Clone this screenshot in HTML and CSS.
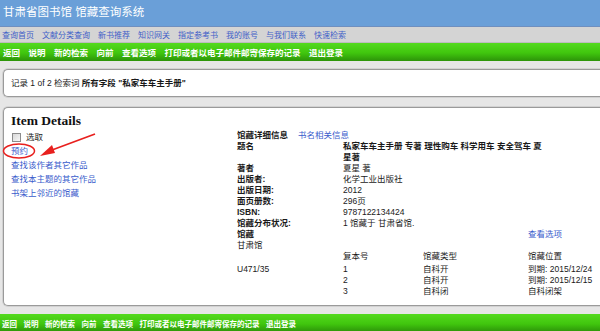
FILE: index.html
```html
<!DOCTYPE html>
<html lang="zh">
<head>
<meta charset="utf-8">
<title>甘肃省图书馆 馆藏查询系统</title>
<link rel="stylesheet" href="styles.css">
</head>
<body>
<header class="header"><h1 class="site-title">甘肃省图书馆 馆藏查询系统</h1></header>
<nav class="topnav">
  <a href="#">查询首页</a>
  <a href="#">文献分类查询</a>
  <a href="#">新书推荐</a>
  <a href="#">知识网关</a>
  <a href="#">指定参考书</a>
  <a href="#">我的账号</a>
  <a href="#">与我们联系</a>
  <a href="#">快速检索</a>
</nav>
<div class="greenbar">
  <a href="#">返回</a>
  <a href="#">说明</a>
  <a href="#">新的检索</a>
  <a href="#">向前</a>
  <a href="#">查看选项</a>
  <a href="#">打印或者以电子邮件邮寄保存的记录</a>
  <a href="#">退出登录</a>
</div>
<main class="content">
  <section class="box record-box">记录 1 of 2 检索词 <b>所有字段 "私家车车主手册"</b></section>
  <section class="box detail-box">
    <h2 class="detail-title">Item Details</h2>
    <div class="detail-cols">
      <div class="left-col">
        <label class="select-row"><span class="cb"></span>选取</label>
        <a href="#">预约</a>
        <a href="#">查找该作者其它作品</a>
        <a href="#">查找本主题的其它作品</a>
        <a href="#">书架上邻近的馆藏</a>
      </div>
      <div class="right-col">
        <div class="full"><b>馆藏详细信息</b><a class="related" href="#">书名相关信息</a></div>
        <b>题名</b><b class="val title-val">私家车车主手册 专著 理性购车 科学用车 安全驾车 夏星著</b>
        <b>著者</b><span class="val">夏星 著</span>
        <b>出版者:</b><span class="val">化学工业出版社</span>
        <b>出版日期:</b><span class="val">2012</span>
        <b>面页册数:</b><span class="val">296页</span>
        <b>ISBN:</b><span class="val">9787122134424</span>
        <b>馆藏分布状况:</b><span class="val">1 馆藏于 甘肃省馆.</span>
        <b class="span3">馆藏</b><a href="#">查看选项</a>
        <span class="full">甘肃馆</span>
        <span></span><span>复本号</span><span>馆藏类型</span><span>馆藏位置</span>
        <span class="first">U471/35</span><span class="first">1</span><span class="first">自科开</span><span class="first">到期: 2015/12/24</span>
        <span></span><span>2</span><span>自科开</span><span>到期: 2015/12/15</span>
        <span></span><span>3</span><span>自科闭</span><span>自科闭架</span>
      </div>
    </div>
  </section>
</main>
<div class="greenbar bottom">
  <a href="#">返回</a>
  <a href="#">说明</a>
  <a href="#">新的检索</a>
  <a href="#">向前</a>
  <a href="#">查看选项</a>
  <a href="#">打印或者以电子邮件邮寄保存的记录</a>
  <a href="#">退出登录</a>
</div>
<svg class="annotation" width="600" height="331" viewBox="0 0 600 331" aria-hidden="true">
  <ellipse cx="19" cy="151" rx="15.5" ry="7" fill="none" stroke="#e8201e" stroke-width="1.5"/>
  <path d="M95 134 L52 150" stroke="#e8201e" stroke-width="1.8" fill="none"/>
  <polygon points="40,156 52,145 55,153" fill="#e8201e"/>
</svg>
</body>
</html>
```

FILE: styles.css
```css
* { box-sizing: border-box; margin: 0; padding: 0; }
html, body { width: 600px; height: 331px; overflow: hidden; }
body {
  font-family: "Liberation Sans", "Noto Sans CJK SC", sans-serif;
  font-size: 8.5px;
  color: #1a1a1a;
  background: #e6e6e6;
  position: relative;
}
a { color: #3a5ccc; text-decoration: none; }
b { font-weight: bold; }

.header {
  height: 27px;
  background: #6a9fd8;
  border-bottom: 1px solid #6f8fbf;
  display: flex;
  align-items: center;
  padding-left: 3px;
}
.site-title { font-size: 11.5px; font-weight: normal; color: #fff; line-height: 1; }

.topnav {
  height: 16px;
  background: #d4d4d4;
  border-bottom: 1px solid #bdbdbd;
  display: flex;
  align-items: center;
  gap: 8px;
  padding-left: 2px;
  font-size: 8px;
}
.topnav a { color: #4160c8; }

.greenbar {
  height: 18px;
  background: linear-gradient(#54da1e, #40c60e 55%, #2c9309);
  display: flex;
  align-items: center;
  gap: 8.5px;
  padding-left: 3px;
  font-size: 8.5px;
  font-weight: bold;
}
.greenbar a { color: #fff; }
.greenbar.bottom { font-size: 7.5px; gap: 6.5px; padding-left: 2px; }

.content { padding: 8px 0 8px 3px; }

.box {
  background: #fff;
  border: 1px solid #9a9a9a;
  border-right: none;
  border-radius: 5px 0 0 5px;
  box-shadow: 0 0 0 1px #d2d2d2;
  padding-left: 7px;
}
.record-box { padding-top: 7.5px; padding-bottom: 7.5px; line-height: 11px; }
.detail-box { margin-top: 10px; padding-bottom: 8.5px; }

.detail-title {
  font-family: "Liberation Serif", serif;
  font-size: 13.5px;
  line-height: 14px;
  margin-top: 6px;
  color: #111;
}
.detail-cols { display: flex; margin-top: 2px; }

.left-col {
  width: 226px;
  display: flex;
  flex-direction: column;
  align-items: flex-start;
  line-height: 14px;
}
.select-row { display: flex; align-items: center; gap: 5px; margin-left: 1px; }
.cb {
  width: 9px; height: 9px;
  border: 1px solid #8c8c8c;
  background: linear-gradient(135deg, #d8d8d8, #f8f8f8);
}

.right-col {
  display: grid;
  grid-template-columns: 106px 80px 105px 1fr;
  line-height: 11px;
  align-content: start;
}
.right-col .full { grid-column: 1 / -1; }
.right-col .val { grid-column: 2 / -1; }
.right-col .title-val { max-width: 206px; }
.right-col .span3 { grid-column: 1 / 4; }
.related { margin-left: 10px; }
.right-col .first { padding-top: 1.5px; }

.annotation { position: absolute; left: 0; top: 0; pointer-events: none; }
```
